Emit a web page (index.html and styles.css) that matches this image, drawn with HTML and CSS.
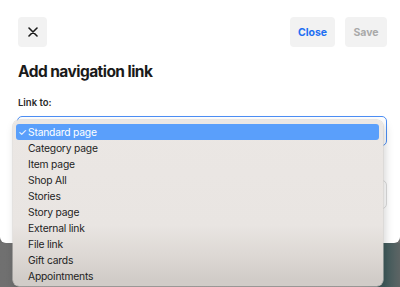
FILE: index.html
```html
<!DOCTYPE html>
<html lang="en">
<head>
    <meta charset="UTF-8">
    <meta name="viewport" content="width=device-width, initial-scale=1.0">
    <title>Add navigation link</title>
    <link rel="stylesheet" href="styles.css">
</head>
<body>
<div class="modal">
    <div class="topbar">
        <button class="btn icon-btn" aria-label="Close">
            <svg width="10" height="10" viewBox="0 0 10 10"><path d="M1 1L9 9M9 1L1 9" stroke="#1b1b1b" stroke-width="1.6" stroke-linecap="round"/></svg>
        </button>
        <div class="actions">
            <button class="btn text-btn close">Close</button>
            <button class="btn text-btn save" disabled>Save</button>
        </div>
    </div>
    <h1 class="title">Add navigation link</h1>
    <div class="field-label">Link to:</div>
    <div class="select-box"></div>
    <div class="input-box"></div>

    <ul class="menu">
        <li class="menu-item selected"><span class="check">✓</span>Standard page</li>
        <li class="menu-item">Category page</li>
        <li class="menu-item">Item page</li>
        <li class="menu-item">Shop All</li>
        <li class="menu-item">Stories</li>
        <li class="menu-item">Story page</li>
        <li class="menu-item">External link</li>
        <li class="menu-item">File link</li>
        <li class="menu-item">Gift cards</li>
        <li class="menu-item">Appointments</li>
    </ul>
</div>
<div class="backdrop"></div>
</body>
</html>
```

FILE: styles.css
```css
body { margin: 0; font-family: Inter, "Liberation Sans", sans-serif; background: #6c6c6c; overflow: hidden; }
.modal { position: relative; background: #fff; height: 243px; box-sizing: border-box; padding: 17px 13px 0 18px; border-radius: 0 0 6px 6px; }
.topbar { display: flex; justify-content: space-between; align-items: center; }
.btn { border: none; background: #f2f2f2; border-radius: 4px; height: 30px; padding: 0; font-family: inherit; cursor: pointer; }
.icon-btn { width: 29px; display: flex; align-items: center; justify-content: center; }
.actions { display: flex; gap: 10px; }
.text-btn { font-size: 10.5px; font-weight: 700; }
.close { width: 45px; color: #1f6ff2; }
.save { width: 42px; color: #a9a9a9; }

.title { margin: 14px 0 0; font-size: 15.5px; line-height: 22px; font-weight: 700; color: #1a1a1a; letter-spacing: -0.55px; }
.field-label { margin-top: 13px; font-size: 9.5px; line-height: 14px; font-weight: 600; color: #2a2a2a; }
.select-box { margin: 6px 0 0 -1px; height: 30px; box-sizing: border-box; border: 1.5px solid #4d8ff5; border-radius: 5px; }
.input-box { margin: 34px 0 0 -1px; height: 29px; box-sizing: border-box; border: 1px solid #dcdcdc; border-radius: 5px; }

.menu {
    position: absolute;
    left: 13px;
    top: 120px;
    width: 370px;
    height: 166px;
    box-sizing: border-box;
    margin: 0;
    padding: 4px 4px 2px 3px;
    list-style: none;
    border-radius: 6px;
    background: linear-gradient(#ebe7e4 0, #e9e5e2 105px, #ddd8d4 135px, #d1ccc8 160px);
    box-shadow: 0 0 0 0.5px #d6d2ce, 2px 4px 10px rgba(0, 0, 0, 0.18);
    z-index: 2;
}
.menu-item { position: relative; height: 16px; line-height: 16px; padding-left: 12px; font-size: 10.3px; letter-spacing: -0.2px; color: #1e1e1e; border-radius: 3px; }
.menu-item.selected { background: #5a9ffb; color: #fff; }
.check { position: absolute; left: 2px; font-size: 10px; }

.backdrop { height: 44px; background: linear-gradient(90deg, #707070 0, #6a6a6a 90%, #3f5b5c 96%, #5d6464 100%); }
```
